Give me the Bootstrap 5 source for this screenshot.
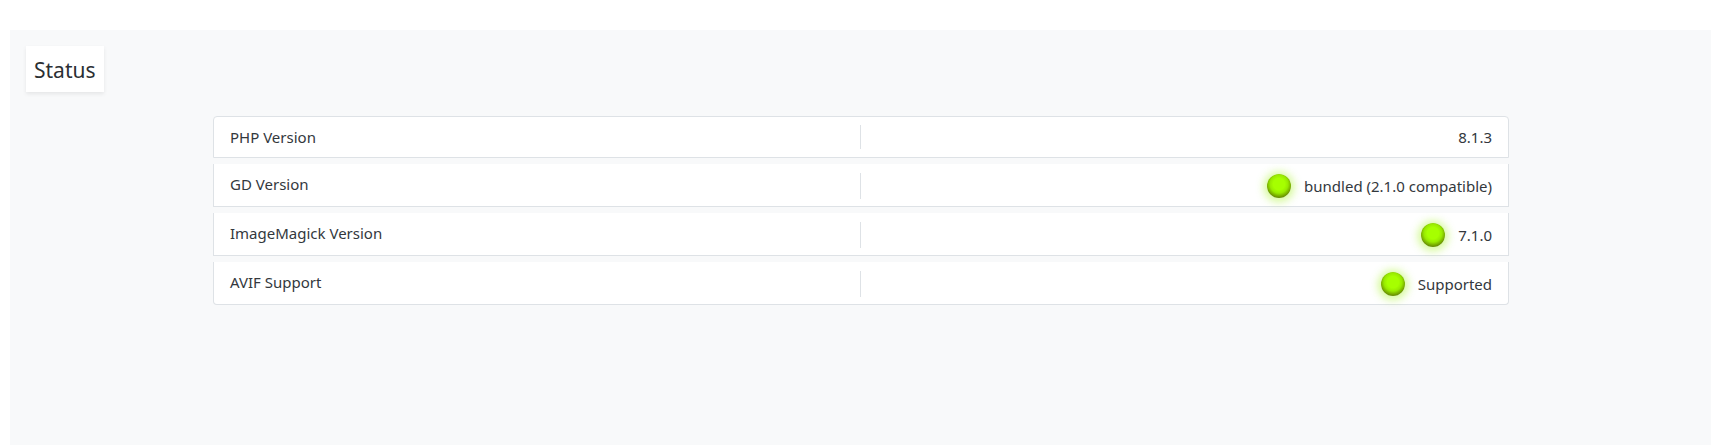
<!DOCTYPE html>
<html lang="en">
<head>
<meta charset="utf-8">
<title>Status</title>
<link rel="stylesheet" href="https://cdn.jsdelivr.net/npm/bootstrap@5.3.0/dist/css/bootstrap.min.css">
<style>
body { background: #fff; font-family: "Noto Sans", sans-serif; font-size: 15px; color: #33383d; height: 445px; overflow: hidden; }
.stage { margin: 30px 0 0 10px; height: 415px; background: #f8f9fa; padding: 16px; }
.page-tag { background: #fff; font-size: 21px; line-height: 30px; padding: 9px 8px 7px; box-shadow: 0 2px 4px rgba(0,0,0,.08); font-weight: 400; margin: 0; color: #2b2f33; }
.status-wrap { width: 1296px; margin: 24px 0 0 187px; }
.status-row { background: #fff; border: 1px solid #dee2e6; border-top: 0; height: 43px; margin-bottom: 6px; align-items: center; }
.status-row:first-child { border-top: 1px solid #dee2e6; height: 42px; border-radius: 4px 4px 0 0; }
.status-row:last-child { border-radius: 0 0 4px 4px; margin-bottom: 0; }
.status-cell { padding: 0 16px; height: 24px; line-height: 22px; }
.status-label { flex: 0 0 646px; }
.status-row:first-child .status-label { line-height: 24px; }
.status-value { flex: 1 1 auto; border-left: 1px solid #dee2e6; }
.status-value.tall { height: 26px; margin-top: 1px; }
.val-text { margin-top: 1px; }
.led { width: 24px; height: 24px; border-radius: 50%; background: radial-gradient(circle 15px at 50% 42%, #a6ff00 0 38%, #98ea00 60%, #719f00 84%, #557800 100%); box-shadow: 0 1px 9px 3px rgba(150,240,0,.42); margin-right: 13px; }
</style>
</head>
<body>
<div class="stage">
  <div class="d-flex"><h1 class="page-tag">Status</h1></div>
  <div class="status-wrap">
    <div class="status-row d-flex"><div class="status-cell status-label">PHP Version</div><div class="status-cell status-value d-flex justify-content-end align-items-center">8.1.3</div></div>
    <div class="status-row d-flex"><div class="status-cell status-label">GD Version</div><div class="status-cell status-value tall d-flex justify-content-end align-items-center"><span class="led"></span><span class="val-text">bundled (2.1.0 compatible)</span></div></div>
    <div class="status-row d-flex"><div class="status-cell status-label">ImageMagick Version</div><div class="status-cell status-value tall d-flex justify-content-end align-items-center"><span class="led"></span><span class="val-text">7.1.0</span></div></div>
    <div class="status-row d-flex"><div class="status-cell status-label">AVIF Support</div><div class="status-cell status-value tall d-flex justify-content-end align-items-center"><span class="led"></span><span class="val-text">Supported</span></div></div>
  </div>
</div>
<script src="https://cdn.jsdelivr.net/npm/bootstrap@5.3.0/dist/js/bootstrap.bundle.min.js"></script>
</body>
</html>
